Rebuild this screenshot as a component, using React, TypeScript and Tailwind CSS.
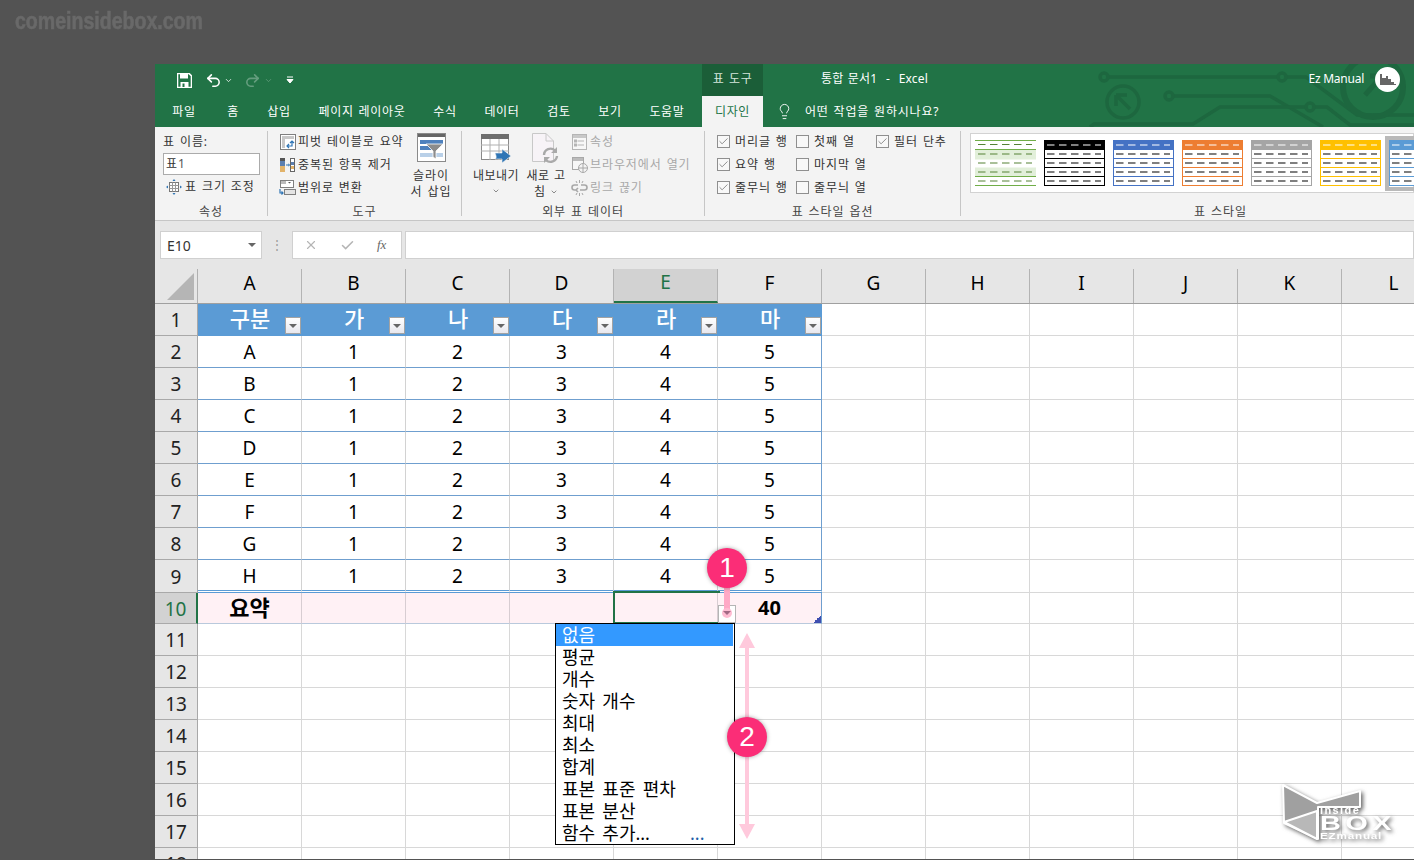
import React from "react";
import { Lightbulb, Undo2, Redo2, ChevronDown, X, Check } from "lucide-react";

const COLS = ["A", "B", "C", "D", "E", "F", "G", "H", "I", "J", "K", "L"];
const TABS: [string, string][] = [
  ["파일", "w-[58px]"],
  ["홈", "w-[40px]"],
  ["삽입", "w-[52px]"],
  ["페이지 레이아웃", "w-[114px]"],
  ["수식", "w-[52px]"],
  ["데이터", "w-[62px]"],
  ["검토", "w-[52px]"],
  ["보기", "w-[50px]"],
  ["도움말", "w-[64px]"],
];
const HEAD = ["구분", "가", "나", "다", "라", "마"];
const ROWS = ["A", "B", "C", "D", "E", "F", "G", "H"];
const MENU = ["없음", "평균", "개수", "숫자 개수", "최대", "최소", "합계", "표본 표준 편차", "표본 분산"];

function Circuit() {
  return (
    <svg className="absolute left-0 top-0 pointer-events-none" width="1259" height="63" viewBox="155 64 1259 63" fill="none" stroke="#1d673f" strokeWidth="3.5">
      <path d="M1108 77H1278M1286 77H1306L1357 115H1414" />
      <circle cx="1104" cy="77" r="4" />
      <circle cx="1282" cy="77" r="4" />
      <circle cx="1123" cy="102" r="16" />
      <path d="M1116 95L1130 109M1116 95V106M1116 95H1127" />
      <path d="M1173 96H1270L1323 127" />
      <circle cx="1169" cy="96" r="4" />
      <path d="M1090 127L1094 124H1193L1220 107H1306M1314 107H1327L1350 125H1414" />
      <circle cx="1310" cy="107" r="4" />
      <circle cx="1373" cy="87" r="30" strokeWidth="6" />
      <path d="M1365 95L1382 76M1382 76H1370M1382 76V88" strokeWidth="5" />
    </svg>
  );
}

function SaveIcon() {
  return (
    <svg width="15" height="15" viewBox="0 0 15 15">
      <path d="M0.5 0.5H12L14.5 3V14.5H0.5Z" fill="none" stroke="#fff" strokeWidth="1.6" />
      <rect x="3" y="1" width="8" height="4.5" fill="#fff" />
      <rect x="3.5" y="9" width="8" height="5.5" fill="#fff" />
      <rect x="5.5" y="10.5" width="2" height="3.5" fill="#217346" />
    </svg>
  );
}

function PivotIcon() {
  return (
    <svg width="16" height="16" viewBox="0 0 16 16">
      <rect x="0.5" y="0.5" width="15" height="15" fill="#fff" stroke="#7f7f7f" />
      <rect x="2" y="2" width="3" height="12" fill="#c8c8c8" />
      <rect x="2" y="2" width="12" height="3" fill="#c8c8c8" />
      <path d="M7 12H12V7M10 9L12 7L14 9M9 10L7 12L9 14" fill="none" stroke="#2f75b5" strokeWidth="1.2" />
    </svg>
  );
}

function DupIcon() {
  return (
    <svg width="16" height="16" viewBox="0 0 16 16">
      <rect x="0" y="1" width="5" height="14" fill="#5b7fb0" />
      <rect x="0" y="1" width="5" height="3" fill="#555" />
      <rect x="0" y="9" width="5" height="6" fill="#e2b36a" />
      <rect x="10.5" y="1.5" width="4" height="13" fill="#fff" stroke="#666" />
      <rect x="11" y="5" width="3" height="3" fill="#5b7fb0" />
      <rect x="11" y="9" width="3" height="3" fill="#e2b36a" />
      <path d="M6 8H9.5M8.3 7L9.5 8L8.3 9" fill="none" stroke="#2f75b5" />
    </svg>
  );
}

function ConvertIcon() {
  return (
    <svg width="17" height="16" viewBox="0 0 17 16">
      <rect x="1.5" y="0.5" width="13" height="7" fill="#fff" stroke="#7f7f7f" />
      <rect x="2" y="1" width="5" height="3" fill="#bbb" />
      <path d="M9 2H12L10.5 3.5Z" fill="#555" />
      <rect x="5.5" y="9.5" width="11" height="5" fill="#e4e4e4" stroke="#7f7f7f" />
      <path d="M1 9V13H4M2.5 11.5L4 13L2.5 14.5" fill="none" stroke="#2f75b5" strokeWidth="1.2" />
    </svg>
  );
}

function ResizeIcon() {
  return (
    <svg width="16" height="16" viewBox="0 0 16 16">
      <rect x="3.5" y="3.5" width="9" height="9" fill="#fff" stroke="#777" />
      <path d="M3.5 6.5H12.5M3.5 9.5H12.5M6.5 3.5V12.5M9.5 3.5V12.5" stroke="#999" />
      <path d="M8 0L9.5 2H6.5ZM8 16L6.5 14H9.5ZM0 8L2 6.5V9.5ZM16 8L14 9.5V6.5Z" fill="#2f75b5" />
    </svg>
  );
}

function SlicerIcon() {
  return (
    <svg width="29" height="29" viewBox="0 0 29 29">
      <rect x="0.5" y="0.5" width="28" height="28" fill="#fff" stroke="#8a8a8a" />
      <rect x="1" y="1" width="27" height="3" fill="#666" />
      <rect x="3" y="7" width="23" height="4" fill="#4f81bd" />
      <rect x="3" y="13" width="15" height="4" fill="#4f81bd" />
      <rect x="3" y="20" width="23" height="4" fill="#b9d0e8" />
      <path d="M9 11H26L19 18V26L16 24V18Z" fill="#8c8c8c" stroke="#fff" strokeWidth="0.8" />
    </svg>
  );
}

function ExportIcon() {
  return (
    <svg width="32" height="30" viewBox="0 0 32 30">
      <rect x="0.5" y="0.5" width="27" height="25" fill="#fff" stroke="#8a8a8a" />
      <rect x="0" y="0" width="28" height="5" fill="#6e6e6e" />
      <path d="M0 11H28M0 17H28M9 5V26M18 5V26" stroke="#b0b0b0" />
      <path d="M14 19H21V15L30 22L21 29V25H14C16 24 15 21 14 19Z" fill="#2f75b5" stroke="#f3f3f3" strokeWidth="0.6" />
    </svg>
  );
}

function RefreshIcon() {
  return (
    <svg width="28" height="32" viewBox="0 0 28 32">
      <path d="M0.5 0.5H14L21.5 8V28.5H0.5Z" fill="#f7f3f7" stroke="#c8c8c8" />
      <path d="M14 0.5V8H21.5" fill="none" stroke="#c8c8c8" />
      <path d="M12 22A6.5 6.5 0 0 1 23 17.5M25 23A6.5 6.5 0 0 1 14 27" fill="none" stroke="#a9a9a9" strokeWidth="2.4" />
      <path d="M25 14V20H19ZM12 30V24H18Z" fill="#a9a9a9" />
    </svg>
  );
}

function PropsIcon() {
  return (
    <svg width="15" height="16" viewBox="0 0 15 16" fill="none" stroke="#b5b5b5">
      <rect x="0.5" y="0.5" width="14" height="15" fill="#f7f7f7" />
      <rect x="1" y="1" width="13" height="3" fill="#c8c8c8" stroke="none" />
      <path d="M5.5 7H12M5.5 11H12" />
      <rect x="2.5" y="6" width="2" height="2" />
      <rect x="2.5" y="10" width="2" height="2" />
    </svg>
  );
}

function BrowserIcon() {
  return (
    <svg width="16" height="16" viewBox="0 0 16 16" fill="none" stroke="#a8a8a8">
      <rect x="0.5" y="0.5" width="11" height="12" fill="#f7f7f7" />
      <rect x="1" y="1" width="10" height="3" fill="#bbb" stroke="none" />
      <circle cx="11" cy="11" r="4.5" fill="#f3f3f3" />
      <path d="M6.5 11H15.5M11 6.5V15.5" />
    </svg>
  );
}

function BreakIcon() {
  return (
    <svg width="17" height="16" viewBox="0 0 17 16" fill="none" stroke="#a8a8a8" strokeWidth="1.6">
      <path d="M7 5H3.5A2.5 2.5 0 0 0 3.5 10H5M10 5H13.5A2.5 2.5 0 0 1 13.5 10H9M7 12L5 10L7 8" />
      <path d="M8.5 0V3M5 1L6 3M12 1L11 3M8.5 13V16M5 15L6 13M12 15L11 13" strokeWidth="1" />
    </svg>
  );
}

function Group({ w, label, sep = true, children }: { w: string; label: string; sep?: boolean; children: React.ReactNode }) {
  return (
    <div className={`flex shrink-0 ${w}`}>
      <div className="flex-1 flex flex-col min-w-0">
        <div className="h-[76px] pt-[3px] relative">{children}</div>
        <div className="h-[17px] flex items-center justify-center text-[#444] leading-none">{label}</div>
      </div>
      {sep && <div className="w-px h-[85px] mt-[4px] bg-[#c6c6c6]" />}
    </div>
  );
}

function SmallRow({ icon, text, dim }: { icon: React.ReactNode; text: string; dim?: boolean }) {
  return (
    <div className={`h-[23px] flex items-center gap-[2px] whitespace-nowrap ${dim ? "text-[#a8a8a8]" : "text-[#333]"}`}>
      <span className="w-[17px] flex justify-center shrink-0">{icon}</span>
      {text}
    </div>
  );
}

function Tick({ on, text }: { on?: boolean; text: string }) {
  return (
    <div className="h-[23px] flex items-center gap-[5px] whitespace-nowrap text-[#333]">
      <span className="w-[13px] h-[13px] border border-[#8f8f8f] bg-[#f8f8f8] flex items-center justify-center shrink-0">
        {on && <Check size={11} strokeWidth={1.4} color="#555" />}
      </span>
      {text}
    </div>
  );
}

function Thumb({ c, selected }: { c: string; selected?: boolean }) {
  const dash = (y: number, color: string) => (
    <path d={`M3 ${y}H57`} stroke={color} strokeWidth="1.2" strokeDasharray="7.5 4.5" />
  );
  return (
    <div className={`shrink-0 w-[61px] h-[47px] ${selected ? "outline-[4px] outline outline-[#b9b9b9]" : ""}`}>
      <svg width="61" height="47" viewBox="0 0 61 47">
        <rect x="0.5" y="0.5" width="60" height="45" fill="#fff" stroke={c} />
        <rect x="0" y="0" width="61" height="10" fill={c} />
        {[18.5, 27.5, 36.5].map((y) => (
          <path key={y} d={`M0 ${y}H61`} stroke={c} />
        ))}
        {dash(5, "#fff")}
        {[14, 23, 32, 41].map((y) => (
          <React.Fragment key={y}>{dash(y, "#000")}</React.Fragment>
        ))}
      </svg>
    </div>
  );
}

function GreenThumb() {
  const g = "#70ad47";
  const d = "#548235";
  return (
    <svg className="shrink-0" width="61" height="47" viewBox="0 0 61 47">
      <rect x="0" y="10" width="61" height="9.5" fill="#e2efda" />
      <rect x="0" y="27.5" width="61" height="9.5" fill="#e2efda" />
      <path d="M0 .5H61M0 9.5H61M0 36.5H61M0 45.5H61" stroke={g} />
      {[4.5, 14, 23, 32, 41].map((y) => (
        <path key={y} d={`M3 ${y}H57`} stroke={d} strokeWidth="1.2" strokeDasharray="7.5 4.5" />
      ))}
    </svg>
  );
}

function FilterBtn() {
  return (
    <span className="absolute right-[1px] top-[13px] w-[16px] h-[17px] flex items-center justify-center border border-[#a3a3a3] bg-gradient-to-b from-white to-[#e8e8ee]">
      <span className="w-0 h-0 border-x-[4px] border-x-transparent border-t-[4px] border-t-[#666]" />
    </span>
  );
}

function RowHead({ n, active, h }: { n: number; active?: boolean; h: string }) {
  return (
    <div className={`w-[43px] shrink-0 flex items-center justify-center pt-[2px] box-border border-b border-b-[#a9a9a9] border-r ${h} ${active ? "bg-[#d2d2d2] text-[#217346] border-r-2 border-r-[#217346]" : "bg-[#e6e6e6] text-[#222] border-r-[#a8a8a8]"}`}>
      {n}
    </div>
  );
}

function Grid() {
  return (
    <div className="text-[19px] leading-none text-black">
      {/* column headers */}
      <div className="flex h-[35px] border-b border-[#a0a0a0] bg-[#e6e6e6]">
        <div className="w-[43px] shrink-0 border-r border-[#b0b0b0] flex items-end justify-end pb-[3px] pr-[3px]">
          <svg width="27" height="27" viewBox="0 0 27 27"><path d="M0 27L27 0V27Z" fill="#b5b5b5" /></svg>
        </div>
        {COLS.map((c) => (
          <div
            key={c}
            className={`w-[104px] shrink-0 box-border flex items-center justify-center pb-[6px] border-r border-[#b3b3b3] ${c === "E" ? "bg-[#d2d2d2] text-[#217346] border-b-2 border-b-[#217346]" : ""}`}
          >
            {c}
          </div>
        ))}
      </div>
      {/* header row */}
      <div className="flex h-[32px]">
        <RowHead n={1} h="h-[32px]" />
        {HEAD.map((t) => (
          <div key={t} className="relative w-[104px] shrink-0 box-border bg-[#5b9bd5] text-white text-[22px] font-medium flex justify-center pt-[1px] leading-[26px]">
            {t}
            <FilterBtn />
          </div>
        ))}
        {COLS.slice(6).map((c) => (
          <div key={c} className="w-[104px] shrink-0 box-border bg-white border-r border-b border-[#d8d8d8]" />
        ))}
      </div>
      {/* data rows */}
      {ROWS.map((r, i) => {
        const last = i === 7;
        const rowH = last ? "h-[33px]" : "h-[32px]";
        const line = last ? "border-b-[3px] border-double border-b-[#5b9bd5]" : "border-b border-b-[#6f9fcf]";
        return (
          <div key={r} className={`flex ${rowH}`}>
            <RowHead n={i + 2} h={rowH} />
            {[r, "1", "2", "3", "4", "5"].map((v, j) => (
              <div key={j} className={`w-[104px] shrink-0 box-border bg-white flex items-center justify-center pt-[2px] border-r ${j === 5 ? "border-r-[#6f9fcf]" : "border-r-[#d2d2d2]"} ${line}`}>
                {v}
              </div>
            ))}
            {COLS.slice(6).map((c) => (
              <div key={c} className="w-[104px] shrink-0 box-border bg-white border-r border-b border-[#d8d8d8]" />
            ))}
          </div>
        );
      })}
      {/* total row */}
      <div className="flex h-[31px]">
        <RowHead n={10} active h="h-[31px]" />
        {["요약", "", "", "", "", "40"].map((v, j) => (
          <div key={j} className={`relative w-[104px] shrink-0 box-border bg-[#fff1f5] font-bold flex items-center justify-center border-b border-b-[#b9c9dc] border-r ${j === 5 ? "border-r-[#6f9fcf]" : "border-r-[#d8cdd2]"} ${j === 0 ? "text-[22px] pb-[3px]" : "text-[20px]"}`}>
            {v}
            {j === 4 && <span className="absolute -left-[1px] -top-[2px] w-[107px] h-[33px] border-2 border-[#217346]" />}
            {j === 5 && (
              <svg className="absolute right-0 bottom-0" width="7" height="7" viewBox="0 0 7 7"><path d="M6 0H7V7H0V6H1V4H3V2H5V1H6Z" fill="#3f4fb0" /></svg>
            )}
          </div>
        ))}
        {COLS.slice(6).map((c) => (
          <div key={c} className="w-[104px] shrink-0 box-border bg-white border-r border-b border-[#d8d8d8]" />
        ))}
      </div>
      {/* blank rows */}
      {[11, 12, 13, 14, 15, 16, 17, 18].map((n) => (
        <div key={n} className="flex h-[32px]">
          <RowHead n={n} h="h-[32px]" />
          {COLS.map((c) => (
            <div key={c} className="w-[104px] shrink-0 box-border bg-white border-r border-b border-[#d8d8d8]" />
          ))}
        </div>
      ))}
    </div>
  );
}

function Badge({ n, pos }: { n: number; pos: string }) {
  return (
    <div className={`absolute w-[40px] h-[40px] rounded-full bg-[#fb2d77] text-white text-[28px] leading-none flex items-center justify-center shadow-[0_0_4px_rgba(0,0,0,0.35)] font-['Liberation_Sans',sans-serif] ${pos}`}>
      {n}
    </div>
  );
}

function Logo() {
  return (
    <div className="absolute left-[1280px] top-[783px] w-[120px] h-[62px] drop-shadow-[2px_2px_2px_rgba(60,60,60,0.8)] font-['Liberation_Sans',sans-serif] font-bold text-white">
      <svg className="absolute left-0 top-0" width="120" height="62" viewBox="0 0 120 62">
        <path d="M3 2L37 20L80 8V24H38V56L4 40Z" fill="#a0a0a0" stroke="#fff" strokeWidth="2" strokeLinejoin="round" />
        <path d="M4 39L37 28V56Z" fill="#b8b8b8" stroke="#fff" strokeWidth="2" strokeLinejoin="round" />
      </svg>
      <span className="absolute left-[40px] top-[23px] text-[11px] leading-[8px] tracking-[1.4px]">Inside</span>
      <span className="absolute left-[40px] top-[33px] text-[20px] leading-[15px] tracking-[3px] scale-x-[1.45] origin-left">BOX</span>
      <span className="absolute left-[40px] top-[50px] text-[9px] leading-[7px] tracking-[0.6px] scale-x-[1.3] origin-left">EZmanual</span>
    </div>
  );
}

export default function App() {
  return (
    <div className="relative w-[1414px] h-[860px] overflow-hidden bg-[#535353] font-['Noto_Sans','Noto_Sans_CJK_KR',sans-serif]">
      <div className="h-[64px] pl-[15px] pt-[7px]">
        <span className="inline-block text-[23px] leading-[28px] font-bold text-[#696969] font-['Liberation_Sans',sans-serif] scale-x-[0.85] origin-left [-webkit-text-stroke:0.6px_#696969]">
          comeinsidebox.com
        </span>
      </div>
      <div className="ml-[155px] w-[1259px] h-[795px] overflow-hidden bg-[#e6e6e6]">
        {/* green title area */}
        <div className="relative h-[63px] bg-[#217346] text-white text-[12px] tracking-[0.6px] [word-spacing:1px]">
          <Circuit />
          <div className="relative flex h-[32px] items-center">
            <div className="w-[547px] flex items-center pl-[22px] shrink-0">
              <SaveIcon />
              <Undo2 className="ml-[13px]" size={17} strokeWidth={2.2} />
              <ChevronDown className="ml-[2px]" size={9} strokeWidth={2} />
              <Redo2 className="ml-[11px] opacity-30" size={17} strokeWidth={2.2} />
              <ChevronDown className="ml-[3px] opacity-30" size={9} strokeWidth={2} />
              <svg className="ml-[13px]" width="8" height="8" viewBox="0 0 8 8"><path d="M1 1H7M1 3.5H7L4 7Z" stroke="#fff" fill="#fff" strokeWidth="1" /></svg>
            </div>
            <div className="w-[61px] h-[32px] shrink-0 bg-[#1b5e38] text-[#d5e6dc] flex items-center justify-center pb-[2px]">표 도구</div>
            <div className="ml-[58px] whitespace-pre tracking-[0.2px] pb-[2px]">통합 문서1  -  Excel</div>
            <div className="ml-auto flex items-center gap-[11px] pr-[14px] tracking-[-0.25px] [word-spacing:0] pb-[2px]">
              <span>Ez Manual</span>
              <span className="w-[25px] h-[25px] rounded-full bg-white flex items-center justify-center">
                <svg width="17" height="13" viewBox="0 0 17 13"><path d="M1 1H3V5H7V3H9V6H12V9H15V11H17V12H1Z" fill="#666" /></svg>
              </span>
            </div>
          </div>
          <div className="relative flex h-[31px] items-center">
            {TABS.map(([t, w]) => (
              <div key={t} className={`${w} shrink-0 text-center tracking-[0.7px]`}>{t}</div>
            ))}
            <div className="w-[3px] shrink-0" />
            <div className="w-[61px] h-[31px] shrink-0 bg-[#f3f3f3] text-[#217346] flex items-center justify-center">디자인</div>
            <Lightbulb className="ml-[13px]" size={17} strokeWidth={1.3} />
            <span className="ml-[12px] tracking-[0.8px]">어떤 작업을 원하시나요?</span>
          </div>
        </div>
        {/* ribbon */}
        <div className="flex h-[94px] bg-[#f3f3f3] border-b border-[#c6c6c6] text-[12px] leading-[16px] tracking-[0.9px] [word-spacing:1px] text-[#333]">
          <Group w="w-[113px]" label="속성">
            <div className="pl-[8px]">
              <div className="h-[23px] flex items-center">표 이름:</div>
              <div className="h-[22px] w-[97px] border border-[#ababab] bg-white flex items-center pl-[2px]">표<span className="text-[#555]">1</span></div>
              <div className="h-[24px] flex items-center gap-[3px] pl-[3px] whitespace-nowrap"><ResizeIcon />표 크기 조정</div>
            </div>
          </Group>
          <Group w="w-[194px]" label="도구">
            <div className="pl-[11px]">
              <SmallRow icon={<PivotIcon />} text="피벗 테이블로 요약" />
              <SmallRow icon={<DupIcon />} text="중복된 항목 제거" />
              <SmallRow icon={<ConvertIcon />} text="범위로 변환" />
            </div>
            <div className="absolute right-[8px] top-[6px] w-[44px] flex flex-col items-center">
              <SlicerIcon />
              <div className="text-center leading-[16px] mt-[6px]">슬라이<br />서 삽입</div>
            </div>
          </Group>
          <Group w="w-[243px]" label="외부 표 데이터">
            <div className="flex pl-[8px] h-full">
              <div className="w-[52px] flex flex-col items-center pt-[4px]">
                <span className="pl-[2px] h-[31px]"><ExportIcon /></span>
                <span className="whitespace-nowrap mt-[3px] tracking-[0.5px]">내보내기</span>
                <ChevronDown className="mt-[3px]" size={8} strokeWidth={2} color="#555" />
              </div>
              <div className="w-[48px] flex flex-col items-center pt-[3px]">
                <span className="pr-[1px] h-[32px]"><RefreshIcon /></span>
                <span className="whitespace-nowrap mt-[3px] tracking-[0.5px]">새로 고</span>
                <span className="flex items-center gap-[4px]">침<ChevronDown size={8} strokeWidth={2} color="#555" /></span>
              </div>
              <div className="ml-[1px]">
                <SmallRow dim icon={<PropsIcon />} text="속성" />
                <SmallRow dim icon={<BrowserIcon />} text="브라우저에서 열기" />
                <SmallRow dim icon={<BreakIcon />} text="링크 끊기" />
              </div>
            </div>
          </Group>
          <Group w="w-[256px]" label="표 스타일 옵션">
            <div className="grid grid-cols-[79px_80px_1fr] pl-[12px]">
              <Tick on text="머리글 행" />
              <Tick text="첫째 열" />
              <Tick on text="필터 단추" />
              <Tick on text="요약 행" />
              <Tick text="마지막 열" />
              <span />
              <Tick on text="줄무늬 행" />
              <Tick text="줄무늬 열" />
              <span />
            </div>
          </Group>
          <div className="flex-1 min-w-0 flex flex-col">
            <div className="h-[76px] pl-[9px] pt-[6px]">
              <div className="h-[60px] bg-white border border-[#d2d2d2] flex gap-[8px] pl-[4px] pt-[6px]">
                <GreenThumb />
                <Thumb c="#000000" />
                <Thumb c="#4472c4" />
                <Thumb c="#ed7d31" />
                <Thumb c="#a5a5a5" />
                <Thumb c="#ffc000" />
                <Thumb c="#5b9bd5" selected />
              </div>
            </div>
            <div className="h-[17px] flex items-center justify-center leading-none text-[#444] pl-[66px]">표 스타일</div>
          </div>
        </div>
        {/* formula bar */}
        <div className="h-[39px] flex items-start pt-[10px] pl-[5px]">
          <div className="w-[102px] h-[28px] bg-white border border-[#d0d0d0] flex items-center justify-between pl-[6px] pr-[5px] text-[14px] text-[#333]">
            E10
            <span className="w-0 h-0 border-x-[4px] border-x-transparent border-t-[4px] border-t-[#666]" />
          </div>
          <div className="w-[30px] h-[28px] flex items-center justify-center text-[#999] text-[12px] leading-none">⋮</div>
          <div className="w-[110px] h-[28px] bg-white border border-[#d0d0d0] flex items-center pl-[11px] text-[#b5b5b5]">
            <X size={14} strokeWidth={2} />
            <Check className="ml-[22px]" size={15} strokeWidth={2.4} />
            <span className="ml-[22px] text-[13px] italic text-[#666] font-['Liberation_Serif',serif]">fx</span>
          </div>
          <div className="ml-[3px] flex-1 h-[28px] bg-white border border-[#d0d0d0]" />
        </div>
        <div className="h-[9px]" />
        <Grid />
      </div>

      {/* overlays */}
      <div className="absolute left-[718px] top-[605px] w-[18px] h-[18px] border border-[#b5b5b5] bg-white" />
      <div className="absolute left-[724px] top-[585px] w-[6px] h-[26px] bg-[#ffa9c6]" />
      <div className="absolute left-[722px] top-[608px] w-[10px] h-[10px] rounded-full bg-[#ffbcd2] flex items-center justify-center">
        <span className="w-0 h-0 border-x-[4px] border-x-transparent border-t-[4px] border-t-[#a36a85]" />
      </div>
      <Badge n={1} pos="left-[707px] top-[548px]" />

      <div className="absolute left-[555px] top-[623px] w-[180px] h-[222px] bg-white border border-black text-[18px] leading-[22px] text-black [word-spacing:0.14em] py-0">
        {MENU.map((m, i) => (
          <div key={m} className={`h-[22px] pl-[6px] mr-[1px] ${i === 0 ? "bg-[#3399ff] text-white" : ""}`}>{m}</div>
        ))}
        <div className="h-[22px] pl-[6px] relative">
          함수 추가...
          <span className="absolute left-[134px] top-0 text-[#1f5fa8]">...</span>
        </div>
      </div>

      <svg className="absolute left-[738px] top-[633px]" width="18" height="206" viewBox="0 0 18 206">
        <path d="M9 0L17 15H11V191H17L9 206L1 191H7V15H1Z" fill="#ffc9dc" />
      </svg>
      <Badge n={2} pos="left-[727px] top-[717px]" />
      <Logo />
    </div>
  );
}
